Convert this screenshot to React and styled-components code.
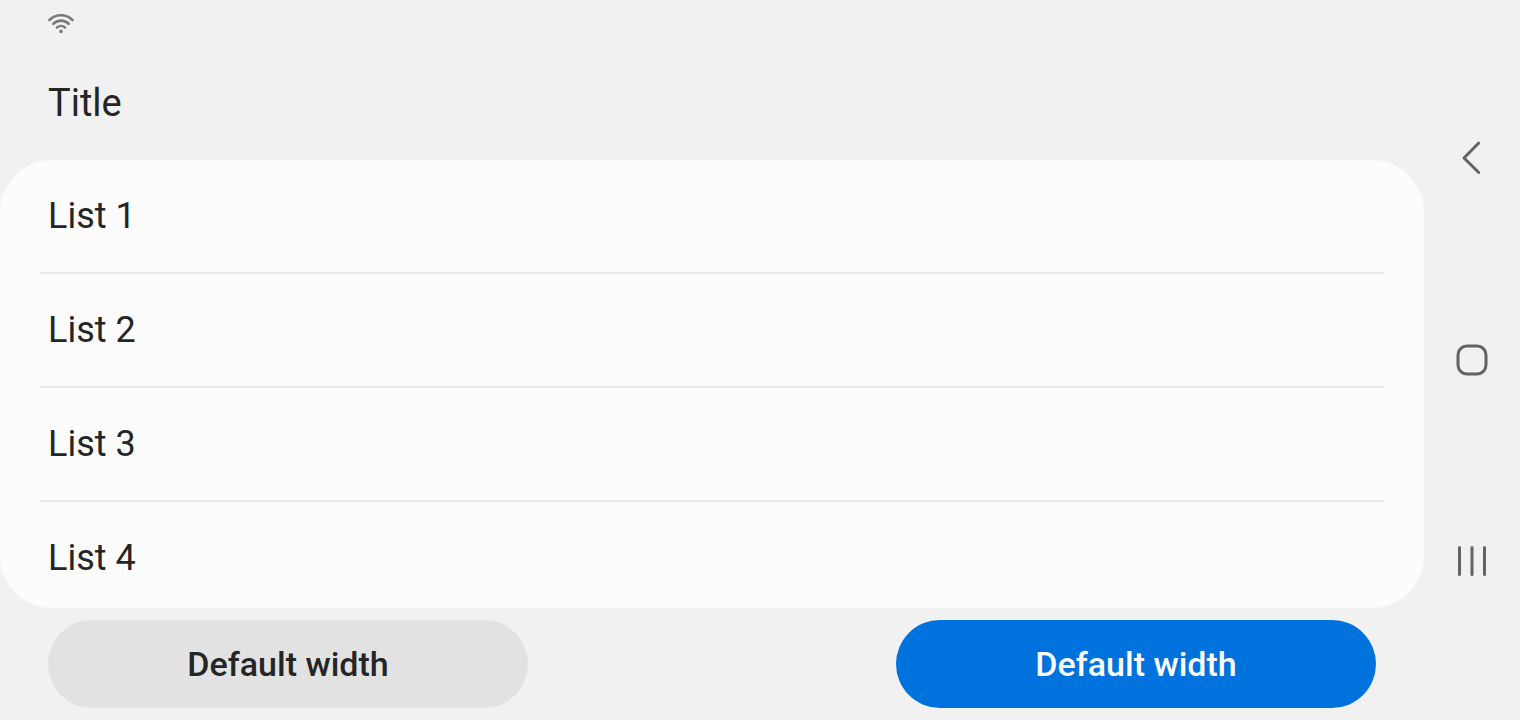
import React from "react";
import styled, { createGlobalStyle } from "styled-components";

const GlobalStyle = createGlobalStyle`
  * { box-sizing: border-box; }
  body { margin: 0; background: #f1f1f1; color: #252525; font-family: Roboto, "Liberation Sans", sans-serif; }
`;

const Screen = styled.div`
  display: grid;
  grid-template-columns: minmax(0, 1fr) 96px;
  min-height: 100vh;
`;

const Content = styled.div`
  display: flex;
  flex-direction: column;
  min-height: 100vh;
`;

const StatusBar = styled.div`
  display: flex;
  align-items: center;
  height: 48px;
  padding: 0 48px;
`;

const Header = styled.header`
  padding: 31px 48px 33px;
`;

const Title = styled.h1`
  margin: 0;
  font-size: 38px;
  line-height: 48px;
  font-weight: 400;
`;

const List = styled.ul`
  flex: 1;
  margin: 0;
  padding: 0 40px;
  list-style: none;
  background: #fcfcfc;
  border-radius: 52px;
  overflow: hidden;
`;

const Item = styled.li`
  display: flex;
  align-items: center;
  height: 114px;
  padding: 0 8px;
  font-size: 36px;
  line-height: 48px;
  border-bottom: 2px solid #e8e8e8;

  &:last-child {
    height: 112px;
    margin-bottom: -8px;
    border-bottom: 0;
  }
`;

const Actions = styled.div`
  display: flex;
  justify-content: space-between;
  gap: 24px;
  padding: 12px 48px;
`;

const ActionButton = styled.button`
  flex: 0 1 480px;
  height: 88px;
  padding: 0;
  border: 0;
  border-radius: 44px;
  font-family: inherit;
  font-size: 34px;
  font-weight: 500;
  line-height: 40px;
  color: ${({ $primary }) => ($primary ? "#fcfcfc" : "#252525")};
  background: ${({ $primary }) => ($primary ? "#0072de" : "#e2e2e2")};
`;

const NavigationBar = styled.nav`
  display: flex;
  flex-direction: column;
  align-items: center;
  justify-content: center;
`;

const NavButton = styled.button`
  display: flex;
  align-items: center;
  justify-content: center;
  width: 96px;
  height: 201px;
  padding: 0;
  border: 0;
  background: transparent;
`;

const NavIcon = styled.svg`
  width: 48px;
  height: 48px;
  fill: none;
  stroke: #636363;
  stroke-width: 3;
  stroke-linecap: round;
  stroke-linejoin: round;
`;

const WifiIcon = () => (
  <svg width="26" height="20" viewBox="0 0 26 20" fill="none" stroke="#7a7a7a" strokeWidth="2.6" strokeLinecap="round" aria-label="Wi-Fi">
    <path d="M1.500 6C7.800-.3 18.200-.3 24.500 6" />
    <path d="M5.300 9.800C9.600 5.600 16.400 5.600 20.700 9.800" />
    <path d="M9 13.500C11.300 11.500 14.700 11.500 17 13.500" />
    <circle cx="13" cy="17.400" r="1.800" fill="#7a7a7a" stroke="none" />
  </svg>
);

export default function App() {
  return (
    <>
      <GlobalStyle />
      <Screen>
        <Content>
          <StatusBar><WifiIcon /></StatusBar>
          <Header><Title>Title</Title></Header>
          <List>
            {[1, 2, 3, 4].map((n) => <Item key={n}>List {n}</Item>)}
          </List>
          <Actions>
            <ActionButton type="button">Default width</ActionButton>
            <ActionButton type="button" $primary>Default width</ActionButton>
          </Actions>
        </Content>
        <NavigationBar aria-label="System navigation">
          <NavButton type="button" aria-label="Back">
            <NavIcon viewBox="0 0 48 48"><path d="M30.700 8 16 23 30.700 37.500" /></NavIcon>
          </NavButton>
          <NavButton type="button" aria-label="Home">
            <NavIcon viewBox="0 0 48 48"><rect x="10" y="10" width="28" height="28" rx="9" /></NavIcon>
          </NavButton>
          <NavButton type="button" aria-label="Recent apps">
            <NavIcon viewBox="0 0 48 48"><path d="M11.500 10.500v27M24 10.500v27M36.500 10.500v27" /></NavIcon>
          </NavButton>
        </NavigationBar>
      </Screen>
    </>
  );
}
